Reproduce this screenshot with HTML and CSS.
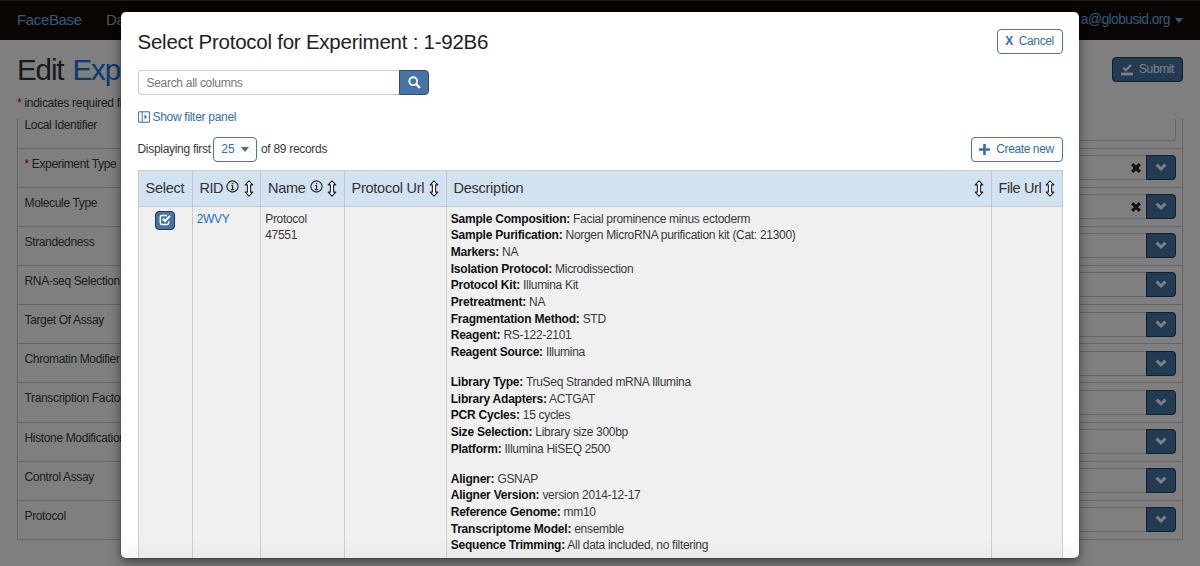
FILE: index.html
```html
<!DOCTYPE html>
<html lang="en">
<head>
<meta charset="utf-8">
<title>FaceBase</title>
<link rel="stylesheet" href="styles.css">
</head>
<body>
<svg class="defs" aria-hidden="true">
  <symbol id="chev" viewBox="0 0 12 9"><path d="M1.6 1.6 6 6 10.4 1.6" fill="none" stroke="currentColor" stroke-width="3"/></symbol>
  <symbol id="cross" viewBox="0 0 10 10"><path d="M1.2 1.2 8.8 8.8M8.8 1.2 1.2 8.8" fill="none" stroke="currentColor" stroke-width="3.1"/></symbol>
  <symbol id="sort" viewBox="0 0 10 17"><path d="M5 .9 8.8 4.9H6.6V12.1H8.8L5 16.1 1.2 12.1H3.4V4.9H1.2Z" fill="#f4f8fc" stroke="#222" stroke-width="1.1" stroke-linejoin="round"/></symbol>
  <symbol id="info" viewBox="0 0 13 13"><circle cx="6.5" cy="6.5" r="5.6" fill="none" stroke="#222" stroke-width="1.1"/><path d="M5.2 5.5H6.6V9.4M5 9.6H8.1" fill="none" stroke="#222" stroke-width="1.1"/><circle cx="6.5" cy="3.5" r=".8" fill="#222"/></symbol>
</svg>
<div class="page">
  <nav class="navbar"><span class="brand">FaceBase</span><span class="navlink">Data</span><span class="user">a@globusid.org<i class="caret"></i></span></nav>
  <header class="head"><h1>Edit <span>Exp</span></h1><button class="submit"><svg width="12" height="12" viewBox="0 0 12 12"><path d="M0 8.6H12V11.4H0Z" fill="currentColor"/><path d="M2.2 3.8 4.8 6.2 10 .9" fill="none" stroke="currentColor" stroke-width="2.2"/></svg>Submit</button></header>
  <p class="req"><b>*</b> indicates required field</p>
  <div class="form">
    <div class="row first"><label>Local Identifier</label><div class="area"></div></div>
    <div class="row"><label><b>*</b> Experiment Type</label><div class="pick"><svg class="x"><use href="#cross"/></svg><span class="drop"><svg><use href="#chev"/></svg></span></div></div>
    <div class="row"><label>Molecule Type</label><div class="pick"><svg class="x"><use href="#cross"/></svg><span class="drop"><svg><use href="#chev"/></svg></span></div></div>
    <div class="row"><label>Strandedness</label><div class="pick"><span class="drop"><svg><use href="#chev"/></svg></span></div></div>
    <div class="row"><label>RNA-seq Selection</label><div class="pick"><span class="drop"><svg><use href="#chev"/></svg></span></div></div>
    <div class="row"><label>Target Of Assay</label><div class="pick"><span class="drop"><svg><use href="#chev"/></svg></span></div></div>
    <div class="row"><label>Chromatin Modifier</label><div class="pick"><span class="drop"><svg><use href="#chev"/></svg></span></div></div>
    <div class="row"><label>Transcription Factor</label><div class="pick"><span class="drop"><svg><use href="#chev"/></svg></span></div></div>
    <div class="row"><label>Histone Modification</label><div class="pick"><span class="drop"><svg><use href="#chev"/></svg></span></div></div>
    <div class="row"><label>Control Assay</label><div class="pick"><span class="drop"><svg><use href="#chev"/></svg></span></div></div>
    <div class="row"><label>Protocol</label><div class="pick"><span class="drop"><svg><use href="#chev"/></svg></span></div></div>
  </div>
</div>
<div class="overlay">
  <div class="modal">
    <div class="title"><h2>Select Protocol for Experiment : 1-92B6</h2><button class="btn cancel"><b>X</b><span>Cancel</span></button></div>
    <div class="search"><span class="field">Search all columns</span><span class="go"><svg width="13" height="13" viewBox="0 0 13 13"><circle cx="5.2" cy="5.2" r="3.9" fill="none" stroke="#fff" stroke-width="1.9"/><path d="M8 8 12 12" stroke="#fff" stroke-width="2.4"/></svg></span></div>
    <div class="filter"><svg width="12" height="12" viewBox="0 0 12 12" fill="none" stroke="currentColor"><path d="M.6.8H11.4V11.2H.6ZM4.2.8V11.2"/><path d="M6.5 3.5 9 6 6.5 8.5Z" fill="currentColor" stroke="none"/></svg><span>Show filter panel</span></div>
    <div class="bar"><span class="disp">Displaying first</span><button class="btn num"><span>25</span><i class="caret"></i></button><span class="of">of 89 records</span><button class="btn create"><svg width="11" height="11" viewBox="0 0 11 11"><path d="M5.5 0V11M0 5.5H11" stroke="currentColor" stroke-width="2.6"/></svg><span>Create new</span></button></div>
    <div class="grid">
      <div class="th sel"><span>Select</span></div>
      <div class="th rid"><span>RID</span><svg class="info"><use href="#info"/></svg><svg class="sort"><use href="#sort"/></svg></div>
      <div class="th name"><span>Name</span><svg class="info"><use href="#info"/></svg><svg class="sort"><use href="#sort"/></svg></div>
      <div class="th purl"><span>Protocol Url</span><svg class="sort end"><use href="#sort"/></svg></div>
      <div class="th desc"><span>Description</span><svg class="sort end"><use href="#sort"/></svg></div>
      <div class="th furl"><span>File Url</span><svg class="sort end"><use href="#sort"/></svg></div>
      <div class="td pickcell"><span class="check"><svg width="12" height="12" viewBox="0 0 12 12" fill="none" stroke="#fff"><path d="M8 1.6H3Q1.3 1.6 1.3 3.3V8.7Q1.3 10.4 3 10.4H8Q9.7 10.4 9.7 8.7V7.2" stroke-width="1.5"/><path d="M3.8 4.8 6 7 11 2" stroke-width="2"/></svg></span></div>
      <div class="td link">2WVY</div>
      <div class="td">Protocol<br>47551</div>
      <div class="td"></div>
      <div class="td text">
        <p><b>Sample Composition:</b> Facial prominence minus ectoderm<br><b>Sample Purification:</b> Norgen MicroRNA purification kit (Cat: 21300)<br><b>Markers:</b> NA<br><b>Isolation Protocol:</b> Microdissection<br><b>Protocol Kit:</b> Illumina Kit<br><b>Pretreatment:</b> NA<br><b>Fragmentation Method:</b> STD<br><b>Reagent:</b> RS-122-2101<br><b>Reagent Source:</b> Illumina</p>
        <p><b>Library Type:</b> TruSeq Stranded mRNA Illumina<br><b>Library Adapters:</b> ACTGAT<br><b>PCR Cycles:</b> 15 cycles<br><b>Size Selection:</b> Library size 300bp<br><b>Platform:</b> Illumina HiSEQ 2500</p>
        <p><b>Aligner:</b> GSNAP<br><b>Aligner Version:</b> version 2014-12-17<br><b>Reference Genome:</b> mm10<br><b>Transcriptome Model:</b> ensemble<br><b>Sequence Trimming:</b> All data included, no filtering</p>
      </div>
      <div class="td"></div>
    </div>
  </div>
</div>
</body>
</html>
```
FILE: styles.css
```css
* { box-sizing: border-box; }
body { margin: 0; height: 566px; overflow: hidden; position: relative; background: #fff; color: #3a3a3a; font: 12px/16.65px "Liberation Sans", Arial, sans-serif; letter-spacing: -.3px; }
.defs { display: none; }
h1, h2, p { margin: 0; font-weight: 400; }
button { font: inherit; letter-spacing: -.4px; padding: 0; }
svg { flex: none; }
.caret { border: 4.5px solid transparent; border-top: 5px solid currentColor; border-bottom: 0; }

.page { height: 566px; letter-spacing: -.35px; }
.navbar { height: 40px; background: #120b05; border-top: 1px solid #333; display: flex; align-items: center; padding: 0 17px; font-size: 15px; color: #aaa; }
.brand { color: #55b8ea; width: 89px; }
.user { color: #55b8ea; font-size: 13.8px; letter-spacing: -.55px; margin-left: auto; display: flex; align-items: center; gap: 5px; }
.head { display: flex; justify-content: space-between; align-items: flex-start; height: 54px; padding: 11px 17px 0; }
h1 { font-size: 29.5px; line-height: 38px; letter-spacing: -1.1px; word-spacing: 2px; color: #333; }
h1 span { color: #1470e0; }
.submit { margin-top: 6px; width: 71px; height: 25px; border: 1px solid #1b3c5c; border-radius: 4px; background: #4674a7; color: #fff; display: flex; align-items: center; justify-content: center; gap: 6px; }
.req { padding: 1px 17px 0; height: 25px; letter-spacing: -.3px; }
.req b, label b { color: #c00; font-weight: 400; }
.form { margin: 0 17px; border: solid #ccc; border-width: 0 1px 1px; }
.row { height: 39.17px; border-top: 1px solid #ccc; display: flex; justify-content: space-between; padding: 7px 6.5px 0; }
.row.first { height: 28.5px; border-top: 0; padding-top: 0; }
.row.first label { margin-top: -2px; }
.area { width: 900px; height: 22px; border: 1px solid #ccc; border-top: 0; border-radius: 0 0 4px 4px; }
.pick { width: 900px; height: 25px; margin-top: -.5px; border: 1px solid #ccc; border-right: 0; border-radius: 4px; display: flex; justify-content: flex-end; align-items: center; gap: 5px; }
.x { width: 10px; height: 10px; color: #222; }
.drop { width: 30px; height: 25px; border: 1px solid #1b3c5c; border-radius: 0 4px 4px 0; background: #4674a7; color: #fff; display: flex; justify-content: center; align-items: center; }
.drop svg { width: 12px; height: 9px; }

.overlay { position: absolute; inset: 0; background: rgba(0,0,0,.5); padding: 12px 121px 8px; }
.modal { width: 958px; height: 546px; background: linear-gradient(#fff 525px, #f6f6f6); border-radius: 5px; box-shadow: 0 4px 12px rgba(0,0,0,.5), 0 0 1px #000; padding: 17px 16.5px 0; overflow: hidden; }
.title { display: flex; justify-content: space-between; height: 41px; }
h2 { font-size: 20.5px; line-height: 25px; letter-spacing: -.24px; color: #222; }
.btn { height: 25px; border: 1px solid #4674a7; border-radius: 4px; background: #fff; color: #3570aa; display: flex; align-items: center; justify-content: center; }
.cancel { width: 66px; gap: 6px; }
.search { display: flex; width: 291.5px; height: 25px; }
.field { flex: 1; border: 1px solid #ccc; border-right: 0; border-radius: 4px 0 0 4px; padding: 4px 8px; color: #777; }
.go { width: 30px; border: 1px solid #2e4f70; border-radius: 0 4px 4px 0; background: #4674a7; display: flex; align-items: center; justify-content: center; }
.filter { display: flex; align-items: center; gap: 3px; height: 42px; padding-top: 2px; color: #3570aa; }
.bar { display: flex; align-items: center; height: 25px; }
.disp { width: 75.5px; white-space: nowrap; }
.num { width: 44px; gap: 6px; margin-right: 4px; letter-spacing: 0; }
.create { width: 92px; margin-left: auto; gap: 6px; }
.grid { display: grid; grid-template-columns: 54px 68.5px 83.5px 102px 545px 71px; grid-template-rows: 35.5px 360px; margin-top: 8px; border: solid #ccc; border-width: 1px 0 0 1px; width: 925px; }
.th { background: #d1e2f1; border: solid #c4c8cc; border-width: 0 1px 1px 0; display: flex; align-items: center; padding-left: 7px; font-size: 14.5px; letter-spacing: -.25px; color: #333; white-space: nowrap; }
.sort { width: 10px; height: 17px; margin: 1px 6.5px 0 4.5px; }
.sort.end { margin-left: auto; }
.info { width: 13px; height: 13px; margin: -4px 0 0 auto; }
.rid { letter-spacing: -.5px; }
.furl { letter-spacing: -.4px; }
.td { background: linear-gradient(#f0f0f0 330px, #e9e9e9); border-right: 1px solid #ccc; padding: 4.3px 4px 4px 4.2px; }
.pickcell { display: flex; justify-content: center; align-items: flex-start; }
.check { width: 20px; height: 19px; border: 1px solid #1c3955; border-radius: 4px; background: #4674a7; display: flex; align-items: center; justify-content: center; }
.link { color: #1470d8; }
.text b { color: #111; letter-spacing: -.21px; }
.text p { margin-bottom: 13.4px; }
```
